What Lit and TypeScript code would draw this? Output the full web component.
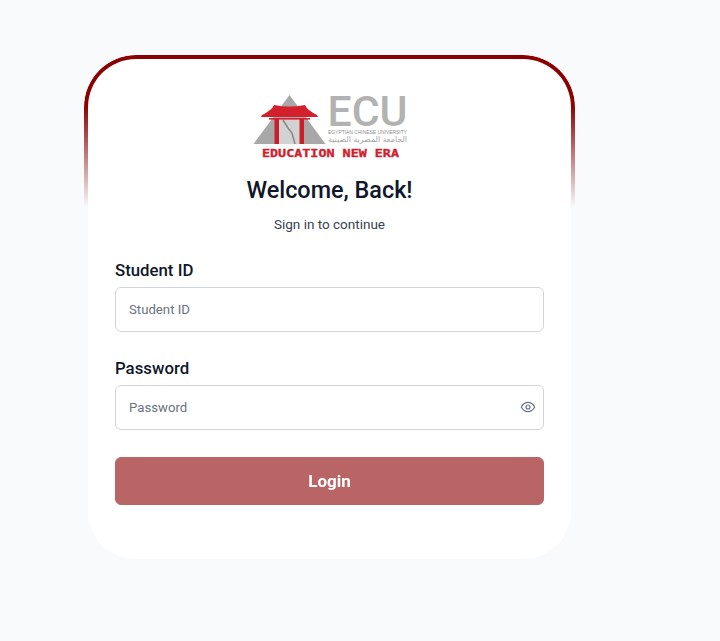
import { LitElement, html, css } from "lit";
import { customElement } from "lit/decorators.js";

@customElement("app-root")
export class AppRoot extends LitElement {
  static styles = css`
    :host {
      display: block;
      min-height: 641px;
      background: #f8fafc;
      font-family: Roboto, "Liberation Sans", sans-serif;
      overflow: hidden;
    }
    .page {
      padding: 59px 0 0 88px;
    }
    .card {
      position: relative;
      box-sizing: border-box;
      width: 483px;
      height: 500px;
      background: #fff;
      border-radius: 48px;
      padding: 36px 27px 0;
    }
    .frame {
      position: absolute;
      left: -4px;
      right: -4px;
      top: -4px;
      height: 160px;
      box-sizing: border-box;
      border: 4px solid #8b0000;
      border-bottom: none;
      border-radius: 52px 52px 0 0;
      -webkit-mask-image: linear-gradient(to bottom, #000 0, #000 50px, transparent 152px);
      mask-image: linear-gradient(to bottom, #000 0, #000 50px, transparent 152px);
      pointer-events: none;
    }
    .logo {
      display: block;
      width: 156px;
      height: 66px;
      margin: 0 auto;
    }
    h1 {
      margin: 13px 0 0;
      text-align: center;
      font-size: 23.4px;
      line-height: 32px;
      font-weight: 500;
      color: #0f172a;
    }
    .sub {
      margin: 8px 0 0;
      text-align: center;
      font-size: 13.5px;
      line-height: 20px;
      color: #374151;
    }
    form {
      margin-top: 25px;
      display: flex;
      flex-direction: column;
    }
    .field {
      display: flex;
      flex-direction: column;
      gap: 6px;
      margin-bottom: 25px;
    }
    label {
      font-size: 16.8px;
      line-height: 22px;
      font-weight: 500;
      color: #0f172a;
    }
    .control {
      position: relative;
    }
    input {
      display: block;
      box-sizing: border-box;
      width: 100%;
      height: 45px;
      padding: 0 13px 1px;
      border: 1px solid #d1d5db;
      border-radius: 6px;
      background: #fff;
      font: 13.2px Roboto, "Liberation Sans", sans-serif;
      color: #111827;
      outline: none;
    }
    input::placeholder {
      color: #6b7280;
      opacity: 1;
    }
    .eye {
      position: absolute;
      right: 8px;
      top: 14px;
      width: 16px;
      height: 16px;
      color: #6b7280;
    }
    button {
      height: 48px;
      margin-top: 2px;
      border: 1px solid #8b0000;
      border-radius: 6px;
      background: #8b0000;
      opacity: 0.6;
      color: #fff;
      font: 700 17px Roboto, "Liberation Sans", sans-serif;
    }
    .ecu { font: 500 42px Roboto, "Liberation Sans", sans-serif; fill: #b2b2b2; }
    .en { font: 400 5.4px "Liberation Sans", sans-serif; fill: #8f8f8f; }
    .ar { font: 400 8px "DejaVu Sans", sans-serif; fill: #a5a5a5; }
    .tag { font: 700 11px "DejaVu Sans Mono", monospace; fill: #cf1f2e; stroke: #cf1f2e; stroke-width: 0.35; }
  `;

  render() {
    return html`
      <div class="page">
        <div class="card">
          <div class="frame"></div>
          <svg class="logo" viewBox="0 0 156 66" role="img" aria-label="ECU logo">
            <polygon points="37.5,0 1.5,49 73.5,49" fill="#a8a8a8" />
            <rect x="26" y="24" width="22" height="25" fill="#d2d2d2" />
            <path d="M31 25 L36 33 L40 38 L43 49" fill="none" stroke="#8a8a8a" stroke-width="1.6" />
            <path d="M22 10 Q37.5 13 53 10 Q55 15 65 20 L66 22 L9 22 L10 20 Q20 15 22 10 Z" fill="#d4202c" />
            <rect x="17" y="23" width="41" height="1.6" fill="#d4202c" />
            <rect x="22.5" y="24" width="4.5" height="25" fill="#c91f2a" />
            <rect x="47.5" y="24" width="4.5" height="25" fill="#c91f2a" />
            <text class="ecu" x="75.5" y="30.5" textLength="80" lengthAdjust="spacingAndGlyphs">ECU</text>
            <text class="en" x="76" y="38.5" textLength="79" lengthAdjust="spacingAndGlyphs">EGYPTIAN CHINESE UNIVERSITY</text>
            <text class="ar" x="155" y="47" direction="rtl" textLength="79" lengthAdjust="spacingAndGlyphs">الجامعة المصرية الصينية</text>
            <text class="tag" x="10" y="62" textLength="137" lengthAdjust="spacingAndGlyphs">EDUCATION NEW ERA</text>
          </svg>
          <h1>Welcome, Back!</h1>
          <p class="sub">Sign in to continue</p>
          <form>
            <div class="field">
              <label for="sid">Student ID</label>
              <div class="control"><input id="sid" placeholder="Student ID" /></div>
            </div>
            <div class="field">
              <label for="pw">Password</label>
              <div class="control">
                <input id="pw" type="password" placeholder="Password" />
                <svg class="eye" viewBox="0 0 24 24" fill="none" stroke="currentColor" stroke-width="1.8" stroke-linecap="round" stroke-linejoin="round">
                  <path d="M2 12s3.6-7 10-7 10 7 10 7-3.6 7-10 7-10-7-10-7Z" />
                  <circle cx="12" cy="12" r="3" />
                </svg>
              </div>
            </div>
            <button type="button">Login</button>
          </form>
        </div>
      </div>
    `;
  }
}
